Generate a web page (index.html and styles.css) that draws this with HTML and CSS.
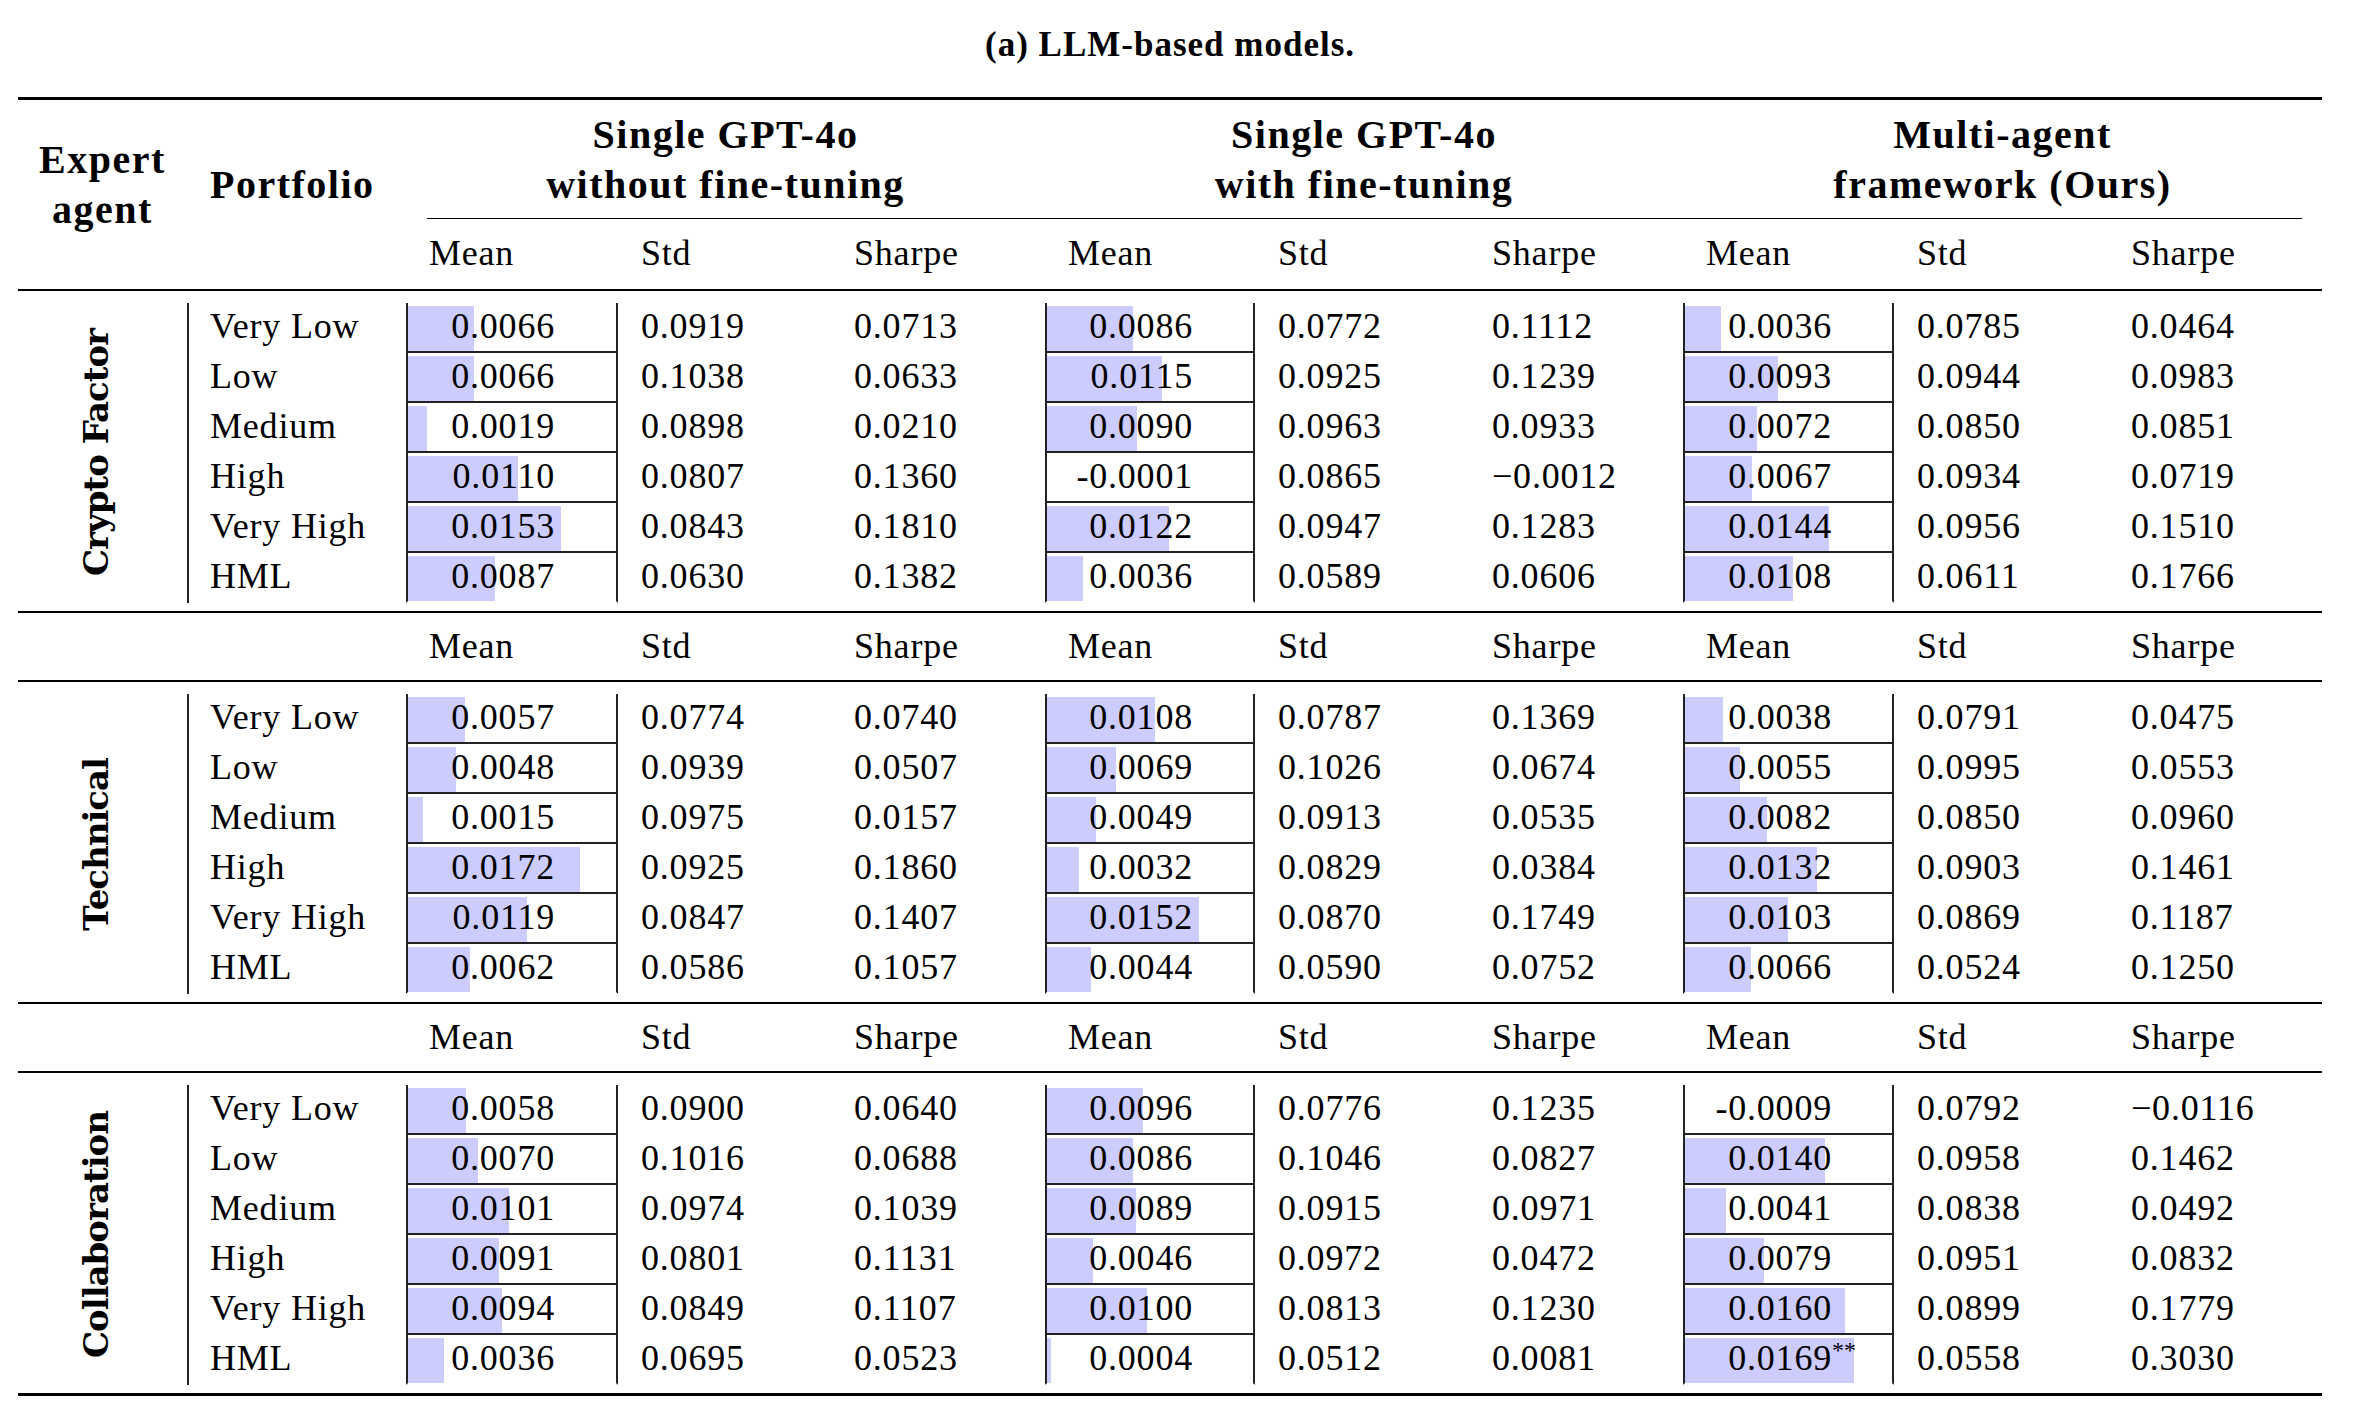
FILE: index.html
```html
<!DOCTYPE html>
<html lang="en">
<head>
<meta charset="utf-8">
<title>(a) LLM-based models.</title>
<link rel="stylesheet" href="styles.css">
</head>
<body>
<div class="page">
  <div class="caption">(a) LLM-based models.</div>
  <div class="tbl">
    <div class="grid head">
      <div class="h-expert">Expert<br>agent</div>
      <div class="h-port">Portfolio</div>
      <div class="h-group g1">Single GPT-4o<br>without fine-tuning</div>
      <div class="h-group g2">Single GPT-4o<br>with fine-tuning</div>
      <div class="h-group g3">Multi-agent<br>framework (Ours)</div>
      <div class="cmid"></div>
      <div class="h-col c3">Mean</div><div class="h-col">Std</div><div class="h-col">Sharpe</div>
      <div class="h-col">Mean</div><div class="h-col">Std</div><div class="h-col">Sharpe</div>
      <div class="h-col">Mean</div><div class="h-col">Std</div><div class="h-col">Sharpe</div>
    </div>

    <div class="grid sec">
      <div class="vcell"><span class="vtext">Crypto Factor</span></div>
      <div class="port">Very Low</div><div class="mean m1" style="--w:66px">0.0066</div><div class="val">0.0919</div><div class="val">0.0713</div><div class="mean m2" style="--w:86px">0.0086</div><div class="val">0.0772</div><div class="val">0.1112</div><div class="mean m3" style="--w:36px">0.0036</div><div class="val">0.0785</div><div class="val">0.0464</div>
      <div class="port">Low</div><div class="mean m1" style="--w:66px">0.0066</div><div class="val">0.1038</div><div class="val">0.0633</div><div class="mean m2" style="--w:115px">0.0115</div><div class="val">0.0925</div><div class="val">0.1239</div><div class="mean m3" style="--w:93px">0.0093</div><div class="val">0.0944</div><div class="val">0.0983</div>
      <div class="port">Medium</div><div class="mean m1" style="--w:19px">0.0019</div><div class="val">0.0898</div><div class="val">0.0210</div><div class="mean m2" style="--w:90px">0.0090</div><div class="val">0.0963</div><div class="val">0.0933</div><div class="mean m3" style="--w:72px">0.0072</div><div class="val">0.0850</div><div class="val">0.0851</div>
      <div class="port">High</div><div class="mean m1" style="--w:110px">0.0110</div><div class="val">0.0807</div><div class="val">0.1360</div><div class="mean m2" style="--w:0px">-0.0001</div><div class="val">0.0865</div><div class="val">&minus;0.0012</div><div class="mean m3" style="--w:67px">0.0067</div><div class="val">0.0934</div><div class="val">0.0719</div>
      <div class="port">Very High</div><div class="mean m1" style="--w:153px">0.0153</div><div class="val">0.0843</div><div class="val">0.1810</div><div class="mean m2" style="--w:122px">0.0122</div><div class="val">0.0947</div><div class="val">0.1283</div><div class="mean m3" style="--w:144px">0.0144</div><div class="val">0.0956</div><div class="val">0.1510</div>
      <div class="port">HML</div><div class="mean m1 last" style="--w:87px">0.0087</div><div class="val">0.0630</div><div class="val">0.1382</div><div class="mean m2 last" style="--w:36px">0.0036</div><div class="val">0.0589</div><div class="val">0.0606</div><div class="mean m3 last" style="--w:108px">0.0108</div><div class="val">0.0611</div><div class="val">0.1766</div>
    </div>

    <div class="grid sub">
      <div></div><div></div>
      <div class="h-col">Mean</div><div class="h-col">Std</div><div class="h-col">Sharpe</div>
      <div class="h-col">Mean</div><div class="h-col">Std</div><div class="h-col">Sharpe</div>
      <div class="h-col">Mean</div><div class="h-col">Std</div><div class="h-col">Sharpe</div>
    </div>

    <div class="grid sec">
      <div class="vcell"><span class="vtext">Technical</span></div>
      <div class="port">Very Low</div><div class="mean m1" style="--w:57px">0.0057</div><div class="val">0.0774</div><div class="val">0.0740</div><div class="mean m2" style="--w:108px">0.0108</div><div class="val">0.0787</div><div class="val">0.1369</div><div class="mean m3" style="--w:38px">0.0038</div><div class="val">0.0791</div><div class="val">0.0475</div>
      <div class="port">Low</div><div class="mean m1" style="--w:48px">0.0048</div><div class="val">0.0939</div><div class="val">0.0507</div><div class="mean m2" style="--w:69px">0.0069</div><div class="val">0.1026</div><div class="val">0.0674</div><div class="mean m3" style="--w:55px">0.0055</div><div class="val">0.0995</div><div class="val">0.0553</div>
      <div class="port">Medium</div><div class="mean m1" style="--w:15px">0.0015</div><div class="val">0.0975</div><div class="val">0.0157</div><div class="mean m2" style="--w:49px">0.0049</div><div class="val">0.0913</div><div class="val">0.0535</div><div class="mean m3" style="--w:82px">0.0082</div><div class="val">0.0850</div><div class="val">0.0960</div>
      <div class="port">High</div><div class="mean m1" style="--w:172px">0.0172</div><div class="val">0.0925</div><div class="val">0.1860</div><div class="mean m2" style="--w:32px">0.0032</div><div class="val">0.0829</div><div class="val">0.0384</div><div class="mean m3" style="--w:132px">0.0132</div><div class="val">0.0903</div><div class="val">0.1461</div>
      <div class="port">Very High</div><div class="mean m1" style="--w:119px">0.0119</div><div class="val">0.0847</div><div class="val">0.1407</div><div class="mean m2" style="--w:152px">0.0152</div><div class="val">0.0870</div><div class="val">0.1749</div><div class="mean m3" style="--w:103px">0.0103</div><div class="val">0.0869</div><div class="val">0.1187</div>
      <div class="port">HML</div><div class="mean m1 last" style="--w:62px">0.0062</div><div class="val">0.0586</div><div class="val">0.1057</div><div class="mean m2 last" style="--w:44px">0.0044</div><div class="val">0.0590</div><div class="val">0.0752</div><div class="mean m3 last" style="--w:66px">0.0066</div><div class="val">0.0524</div><div class="val">0.1250</div>
    </div>

    <div class="grid sub">
      <div></div><div></div>
      <div class="h-col">Mean</div><div class="h-col">Std</div><div class="h-col">Sharpe</div>
      <div class="h-col">Mean</div><div class="h-col">Std</div><div class="h-col">Sharpe</div>
      <div class="h-col">Mean</div><div class="h-col">Std</div><div class="h-col">Sharpe</div>
    </div>

    <div class="grid sec final">
      <div class="vcell"><span class="vtext">Collaboration</span></div>
      <div class="port">Very Low</div><div class="mean m1" style="--w:58px">0.0058</div><div class="val">0.0900</div><div class="val">0.0640</div><div class="mean m2" style="--w:96px">0.0096</div><div class="val">0.0776</div><div class="val">0.1235</div><div class="mean m3" style="--w:0px">-0.0009</div><div class="val">0.0792</div><div class="val">&minus;0.0116</div>
      <div class="port">Low</div><div class="mean m1" style="--w:70px">0.0070</div><div class="val">0.1016</div><div class="val">0.0688</div><div class="mean m2" style="--w:86px">0.0086</div><div class="val">0.1046</div><div class="val">0.0827</div><div class="mean m3" style="--w:140px">0.0140</div><div class="val">0.0958</div><div class="val">0.1462</div>
      <div class="port">Medium</div><div class="mean m1" style="--w:101px">0.0101</div><div class="val">0.0974</div><div class="val">0.1039</div><div class="mean m2" style="--w:89px">0.0089</div><div class="val">0.0915</div><div class="val">0.0971</div><div class="mean m3" style="--w:41px">0.0041</div><div class="val">0.0838</div><div class="val">0.0492</div>
      <div class="port">High</div><div class="mean m1" style="--w:91px">0.0091</div><div class="val">0.0801</div><div class="val">0.1131</div><div class="mean m2" style="--w:46px">0.0046</div><div class="val">0.0972</div><div class="val">0.0472</div><div class="mean m3" style="--w:79px">0.0079</div><div class="val">0.0951</div><div class="val">0.0832</div>
      <div class="port">Very High</div><div class="mean m1" style="--w:94px">0.0094</div><div class="val">0.0849</div><div class="val">0.1107</div><div class="mean m2" style="--w:100px">0.0100</div><div class="val">0.0813</div><div class="val">0.1230</div><div class="mean m3" style="--w:160px">0.0160</div><div class="val">0.0899</div><div class="val">0.1779</div>
      <div class="port">HML</div><div class="mean m1 last" style="--w:36px">0.0036</div><div class="val">0.0695</div><div class="val">0.0523</div><div class="mean m2 last" style="--w:4px">0.0004</div><div class="val">0.0512</div><div class="val">0.0081</div><div class="mean m3 last" style="--w:169px"><span class="num">0.0169<span class="star">**</span></span></div><div class="val">0.0558</div><div class="val">0.3030</div>
    </div>
  </div>
</div>
</body>
</html>
```

FILE: styles.css
```css
html, body {
  margin: 0;
  padding: 0;
  background: #ffffff;
}

body {
  font-family: "Liberation Serif", "Times New Roman", serif;
  color: #000;
  font-size: 36px;
  letter-spacing: 0.8px;
}

.page {
  width: 2304px;
  padding-left: 18px;
}

.caption {
  height: 97px;
  line-height: 90px;
  text-align: center;
  font-weight: 700;
  font-size: 35px;
  letter-spacing: 1px;
}

.tbl {
  border-top: 3px solid #000;
  border-bottom: 3px solid #000;
}

.grid {
  display: grid;
  grid-template-columns: 169px 219px 212px 213px 214px 210px 214px 214px 211px 214px 214px;
}

/* ---------- header ---------- */
.head {
  grid-template-rows: 118px 2px 69px;
  border-bottom: 2px solid #000;
}

.h-expert {
  grid-column: 1;
  grid-row: 1 / 4;
  padding-top: 35px;
  line-height: 50px;
  text-align: center;
  font-weight: 700;
  font-size: 40px;
  letter-spacing: 1.5px;
}

.h-port {
  grid-column: 2;
  grid-row: 1 / 4;
  padding: 60px 0 0 23px;
  line-height: 49px;
  font-weight: 700;
  font-size: 40px;
  letter-spacing: 1.5px;
}

.h-group {
  grid-row: 1;
  padding-top: 10px;
  line-height: 49.5px;
  text-align: center;
  font-weight: 700;
  font-size: 40px;
  letter-spacing: 1.5px;
}

.g1 { grid-column: 3 / 6; }
.g2 { grid-column: 6 / 9; }
.g3 { grid-column: 9 / 12; }

.cmid {
  grid-row: 2;
  grid-column: 3 / 12;
  margin: 0 20px 0 21px;
  border-top: 1px solid #000;
}

.h-col {
  padding-left: 23px;
  line-height: 66px;
}

.head .h-col { grid-row: 3; }
.head .c3 { grid-column: 3; }

/* ---------- sub-header between sections ---------- */
.sub {
  grid-template-rows: 67px;
  border-bottom: 2px solid #000;
}

.sub .h-col { line-height: 67px; }

/* ---------- data sections ---------- */
.sec {
  grid-auto-rows: 50px;
  padding: 12px 0 8px;
  border-bottom: 2px solid #000;
}

.sec.final { border-bottom: none; }

.vcell {
  grid-column: 1;
  grid-row: span 6;
  display: flex;
  align-items: center;
  justify-content: center;
  padding-right: 14px;
}

.vtext {
  writing-mode: vertical-rl;
  transform: rotate(180deg);
  font-family: "DejaVu Serif", "Liberation Serif", serif;
  font-weight: 700;
  font-size: 34px;
  letter-spacing: -1px;
  line-height: 1;
  white-space: nowrap;
}

.port {
  border-left: 2px solid #222;
  padding-left: 21px;
  line-height: 46px;
  white-space: nowrap;
}

.mean {
  box-sizing: border-box;
  border-left: 2px solid #222;
  border-right: 2px solid #222;
  border-bottom: 2px solid #222;
  text-align: right;
  padding-right: 60px;
  line-height: 46px;
  background-image: linear-gradient(#ccccff, #ccccff);
  background-repeat: no-repeat;
  background-position: 0 3px;
  background-size: var(--w) calc(100% - 3px);
}

.mean.m1 { padding-right: 61px; }

.mean.last { border-bottom-color: transparent; }

.val {
  padding-left: 23px;
  line-height: 46px;
}

.num {
  position: relative;
}

.star {
  position: absolute;
  left: 100%;
  top: 0;
  font-size: 24px;
  line-height: 1;
  letter-spacing: 0;
}
```
